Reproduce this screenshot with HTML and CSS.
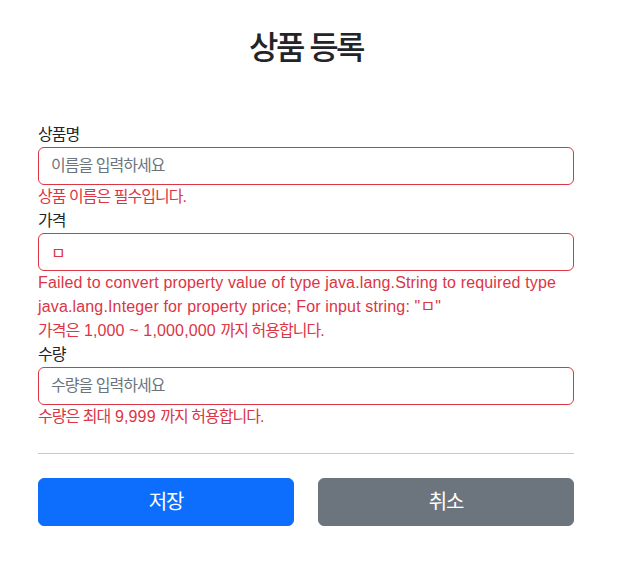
FILE: index.html
```html
<!DOCTYPE html>
<html lang="ko">
<head>
<meta charset="utf-8">
<title>상품 등록</title>
<link rel="stylesheet" href="styles.css">
</head>
<body>
<div class="container">
  <div class="header">
    <h2 class="ko">상품 등록</h2>
  </div>
  <form class="form">
    <div>
      <label for="itemName" class="ko">상품명</label>
      <input type="text" id="itemName" class="form-control field-error ko" placeholder="이름을 입력하세요">
      <div class="field-error ko">상품 이름은 필수입니다.</div>
    </div>
    <div>
      <label for="price" class="ko">가격</label>
      <input type="text" id="price" class="form-control field-error" value="ㅁ">
      <div class="field-error">Failed to convert property value of type java.lang.String to required type java.lang.Integer for property price; For input string: "ㅁ"</div>
      <div class="field-error"><span class="ko">가격은</span> 1,000 ~ 1,000,000 <span class="ko">까지 허용합니다.</span></div>
    </div>
    <div>
      <label for="quantity" class="ko">수량</label>
      <input type="text" id="quantity" class="form-control field-error ko" placeholder="수량을 입력하세요">
      <div class="field-error"><span class="ko">수량은 최대</span> 9,999 <span class="ko">까지 허용합니다.</span></div>
    </div>
    <hr class="divider">
    <div class="actions">
      <button type="button" class="btn btn-primary ko">저장</button>
      <button type="button" class="btn btn-secondary ko">취소</button>
    </div>
  </form>
</div>
</body>
</html>
```
FILE: styles.css
```css
* { box-sizing: border-box; }
html, body { margin: 0; padding: 0; background: #fff; }
body {
  font-family: "Liberation Sans", "Noto Sans CJK KR", sans-serif;
  font-size: 16px;
  line-height: 1.5;
  letter-spacing: 0.15px;
  color: #212529;
}
.ko { letter-spacing: -0.06em; }
.header h2.ko { letter-spacing: -0.08em; }
.container {
  width: 536px;
  margin-left: 38px;
}
.header {
  padding: 28.6px 0 48px;
  text-align: center;
}
.header h2 {
  margin: 0 0 8px;
  font-size: 32px;
  font-weight: 500;
  line-height: 1.2;
}
.form { margin: 0; }
label { display: inline-block; }
.form-control {
  display: block;
  width: 100%;
  height: 38px;
  padding: 6px 12px;
  font: inherit;
  font-size: 16px;
  line-height: 1.5;
  color: #212529;
  background: #fff;
  border: 1px solid #ced4da;
  border-radius: 6px;
  outline: none;
  appearance: none;
}
.form-control.ko { letter-spacing: -0.06em; }
.form-control::placeholder { color: #6c757d; opacity: 1; }
.field-error { color: #dc3545; border-color: #dc3545; }
.divider {
  margin: 24px 0;
  border: 0;
  border-top: 1px solid #212529;
  opacity: .25;
}
.actions {
  display: grid;
  grid-template-columns: 1fr 1fr;
  gap: 24px;
}
.btn {
  height: 48px;
  padding: 8px 16px;
  font: inherit;
  font-size: 20px;
  line-height: 1.5;
  color: #fff;
  border: 1px solid transparent;
  border-radius: 6px;
  cursor: pointer;
}
.btn.ko { letter-spacing: -0.06em; }
.btn-primary { background: #0d6efd; border-color: #0d6efd; }
.btn-secondary { background: #6c757d; border-color: #6c757d; }
```
